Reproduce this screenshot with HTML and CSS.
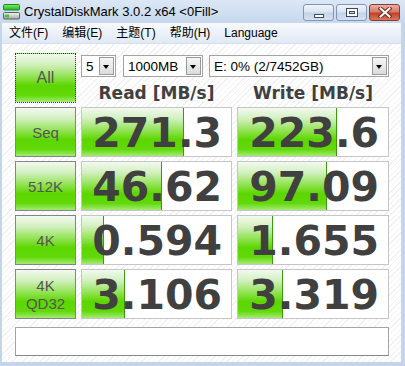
FILE: index.html
```html
<!DOCTYPE html>
<html lang="zh-CN">
<head>
    <meta charset="UTF-8">
    <title>CrystalDiskMark 3.0.2 x64</title>
    <link rel="stylesheet" href="styles.css">
</head>
<body>
    <div class="window">
        <div class="titlebar">
            <svg class="app-icon" width="17" height="16" viewBox="0 0 17 16">
                <defs>
                    <linearGradient id="drive" x1="0" y1="0" x2="0" y2="1">
                        <stop offset="0" stop-color="#f4f4f4"/>
                        <stop offset="1" stop-color="#a8a8a8"/>
                    </linearGradient>
                    <linearGradient id="bar" x1="0" y1="0" x2="0" y2="1">
                        <stop offset="0" stop-color="#7ef06a"/>
                        <stop offset="1" stop-color="#22b322"/>
                    </linearGradient>
                </defs>
                <rect x="0.5" y="0.5" width="16" height="5.5" rx="1" fill="url(#bar)" stroke="#1c8a24"/>
                <rect x="0.5" y="8.5" width="16" height="6.5" rx="1" fill="url(#drive)" stroke="#5e5e5e"/>
                <rect x="2" y="10.5" width="4" height="3" fill="#33cc33"/>
            </svg>
            <span class="title">CrystalDiskMark 3.0.2 x64 &lt;0Fill&gt;</span>
            <div class="caption-buttons">
                <span class="cap-btn minimize"><i></i></span>
                <span class="cap-btn maximize"><i></i></span>
                <span class="cap-btn close">
                    <svg width="14" height="11" viewBox="0 0 14 11">
                        <path d="M2.5 1.5 L11.5 9.5 M11.5 1.5 L2.5 9.5" stroke="#6b2a22" stroke-width="4" stroke-linecap="square"/>
                        <path d="M2.5 1.5 L11.5 9.5 M11.5 1.5 L2.5 9.5" stroke="#ffffff" stroke-width="2" stroke-linecap="square"/>
                    </svg>
                </span>
            </div>
        </div>

        <div class="frame">
            <ul class="menubar">
                <li>文件(F)</li>
                <li>编辑(E)</li>
                <li>主题(T)</li>
                <li>帮助(H)</li>
                <li>Language</li>
            </ul>

            <div class="client">
                <div class="grid">
                    <div class="btn btn-all">All</div>
                    <div class="top-controls">
                        <div class="combos">
                            <div class="combo combo-count"><span>5</span><i class="drop"></i></div>
                            <div class="combo combo-size"><span>1000MB</span><i class="drop"></i></div>
                            <div class="combo combo-drive"><span>E: 0% (2/7452GB)</span><i class="drop"></i></div>
                        </div>
                        <div class="headers">
                            <div>Read [MB/s]</div>
                            <div>Write [MB/s]</div>
                        </div>
                    </div>

                    <div class="btn">Seq</div>
                    <div class="value"><span class="bar" style="width: 102px"></span><span class="num">271.3</span></div>
                    <div class="value"><span class="bar" style="width: 99px"></span><span class="num">223.6</span></div>

                    <div class="btn">512K</div>
                    <div class="value"><span class="bar" style="width: 80px"></span><span class="num">46.62</span></div>
                    <div class="value"><span class="bar" style="width: 89px"></span><span class="num">97.09</span></div>

                    <div class="btn">4K</div>
                    <div class="value"><span class="bar" style="width: 22px"></span><span class="num">0.594</span></div>
                    <div class="value"><span class="bar" style="width: 35px"></span><span class="num">1.655</span></div>

                    <div class="btn btn-two">4K<br>QD32</div>
                    <div class="value"><span class="bar" style="width: 43px"></span><span class="num">3.106</span></div>
                    <div class="value"><span class="bar" style="width: 45px"></span><span class="num">3.319</span></div>
                </div>

                <div class="status"></div>
            </div>
        </div>
    </div>
</body>
</html>
```

FILE: styles.css
```css
:root {
    --frame-color: #c2d5ec;
    --text-dark: #404040;
    --btn-border: #858585;
    --value-border: #c6c6c6;
    --green-fill: linear-gradient(#f3f9f0 0%, #d2f0bf 22%, #8fe24f 48%, #5cd600 66%, #62d90a 86%, #a4ea74 100%);
}

html, body {
    margin: 0;
    padding: 0;
}

body {
    width: 405px;
    height: 366px;
    overflow: hidden;
    font-family: "Liberation Sans", "Noto Sans CJK SC", sans-serif;
}

.window {
    width: 405px;
    height: 366px;
    background-color: var(--frame-color);
    display: flex;
    flex-direction: column;
}

/* Barra de título */
.titlebar {
    height: 23px;
    display: flex;
    align-items: flex-start;
    background: linear-gradient(#dce7f5, #c6d8ee);
    flex-shrink: 0;
}

.app-icon {
    margin: 4px 0 0 3px;
}

.title {
    margin: 4px 0 0 4px;
    font-size: 13px;
    line-height: 16px;
    color: #000;
}

.caption-buttons {
    margin: 4px 5px 0 auto;
    display: flex;
    gap: 2px;
}

.cap-btn {
    width: 31px;
    height: 17px;
    box-sizing: border-box;
    border: 1px solid #8096b3;
    border-radius: 3px;
    background: linear-gradient(#eef3fa 0%, #dbe5f2 45%, #c3d3e8 55%, #d5e2f1 100%);
    display: flex;
    align-items: center;
    justify-content: center;
}

.cap-btn.minimize i {
    display: block;
    width: 8px;
    height: 2px;
    margin-top: 6px;
    background: #fff;
    border: 1px solid #3c4b63;
}

.cap-btn.maximize i {
    display: block;
    width: 6px;
    height: 3px;
    border: 2px solid #fff;
    border-top-width: 2px;
    box-shadow: 0 0 0 1px #3c4b63, inset 0 0 0 1px #3c4b63;
}

.cap-btn.close {
    width: 31px;
    border-color: #8a3a30;
    background: linear-gradient(#eab1a3 0%, #d77a66 45%, #c2402c 55%, #d8785c 100%);
}

/* Menu */
.frame {
    flex: 1;
    margin: 0 4px 4px 2px;
    display: flex;
    flex-direction: column;
}

.menubar {
    list-style: none;
    margin: 0;
    padding: 0;
    height: 20px;
    display: flex;
    background: linear-gradient(#f7f9fd, #e1e9f5);
    border-bottom: 1px solid #d6e0ec;
    font-size: 12px;
    line-height: 21px;
}

.menubar li {
    padding: 0 7px;
}

/* Área do cliente */
.client {
    flex: 1;
    padding: 9px 12px 6px 13px;
    background-color: #fff;
    background-image: repeating-linear-gradient(135deg, #ffffff 0, #ffffff 3px, #eff1f3 3px, #eff1f3 4px);
}

.grid {
    display: grid;
    grid-template-columns: 61px 151px 152px;
    grid-auto-rows: 50px;
    column-gap: 5px;
    row-gap: 4px;
}

.btn {
    box-sizing: border-box;
    border: 1px solid var(--btn-border);
    background: var(--green-fill);
    display: flex;
    align-items: center;
    justify-content: center;
    text-align: center;
    font-size: 15px;
    color: #555;
}

.btn-all {
    border: 1px dotted #333;
    font-size: 16px;
}

.btn-two {
    line-height: 18px;
    padding-top: 1px;
}

.top-controls {
    grid-column: 2 / 4;
    display: flex;
    flex-direction: column;
}

.combos {
    margin-top: 2px;
    height: 22px;
    display: flex;
    gap: 6px;
}

.combo {
    box-sizing: border-box;
    height: 22px;
    border: 1px solid #a3a3a3;
    background: #fff;
    display: flex;
    align-items: center;
    font-size: 13.5px;
    color: #000;
    padding: 0 1px 0 4px;
}

.combo span {
    flex: 1;
}

.combo-count {
    width: 35px;
    margin-right: 1px;
}

.combo-size {
    width: 80px;
}

.combo-drive {
    width: 180px;
}

.drop {
    width: 15px;
    height: 18px;
    box-sizing: border-box;
    border: 1px solid #9a9a9a;
    background: linear-gradient(#f6f6f6, #dcdcdc);
    position: relative;
}

.drop:after {
    content: "";
    position: absolute;
    left: 3px;
    top: 7px;
    border-left: 3.5px solid transparent;
    border-right: 3.5px solid transparent;
    border-top: 4px solid #000;
}

.headers {
    margin-top: 6px;
    display: grid;
    grid-template-columns: 151px 152px;
    column-gap: 5px;
    text-align: center;
    font-family: "DejaVu Sans", sans-serif;
    font-weight: bold;
    font-size: 17px;
    line-height: 20px;
    color: var(--text-dark);
}

/* Caixas de resultado */
.value {
    position: relative;
    box-sizing: border-box;
    border: 1px solid var(--value-border);
    background: #fff;
    overflow: hidden;
    text-align: right;
    padding: 2px 9px 0 0;
    font-family: "DejaVu Sans", sans-serif;
    font-weight: bold;
    font-size: 41px;
    line-height: 46px;
    color: var(--text-dark);
}

.bar {
    position: absolute;
    left: 0;
    top: 0;
    bottom: 0;
    box-sizing: border-box;
    background: var(--green-fill);
    border-right: 1px solid #389a0c;
}

.num {
    position: relative;
}

.status {
    margin-top: 8px;
    height: 29px;
    box-sizing: border-box;
    border: 1px solid #a4a4a4;
    border-bottom-color: #888;
    background: #fff;
}
```
